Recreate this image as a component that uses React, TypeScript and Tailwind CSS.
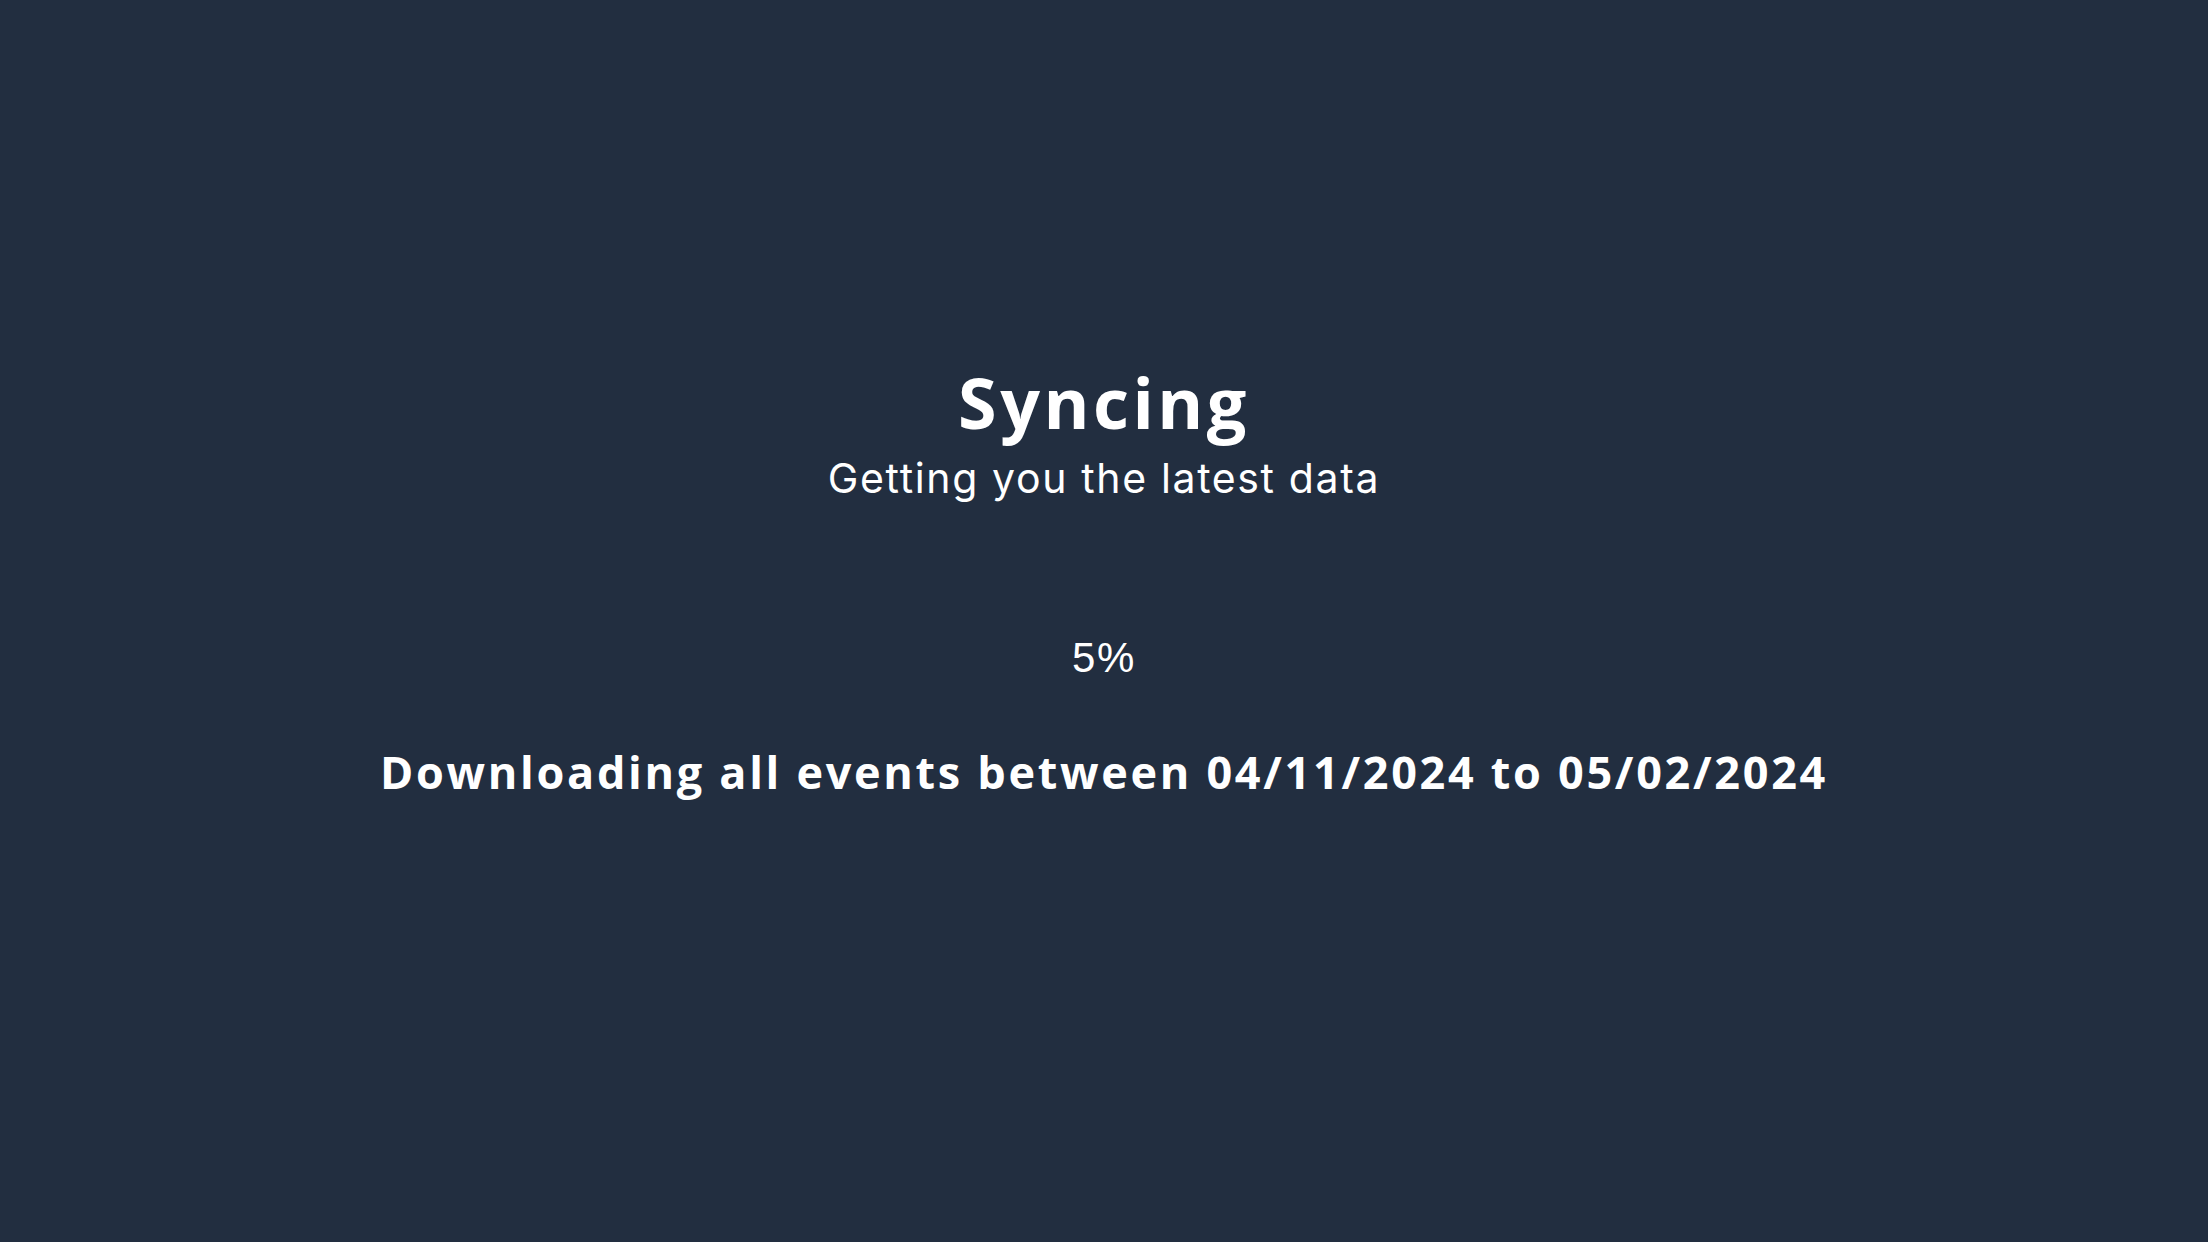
export default function App() {
  return (
    <div className="w-[2208px] h-[1242px] bg-[#222e40] text-white flex flex-col items-center pt-[367px]">
      <h1 className="font-['Open_Sans',sans-serif] font-bold text-[70px] leading-none tracking-[0.05em]">Syncing</h1>
      <p className="mt-[21px] font-['Inter',sans-serif] text-[41px] leading-none tracking-[0.04em]">Getting you the latest data</p>
      <div className="mt-[138px] font-['Liberation_Sans',sans-serif] text-[42px] leading-none tracking-[0.04em]">5%</div>
      <p className="mt-[70px] font-['Open_Sans',sans-serif] font-bold text-[45px] leading-none tracking-[0.06em]">
        Downloading all events between 04/11/2024 to 05/02/2024
      </p>
    </div>
  );
}
